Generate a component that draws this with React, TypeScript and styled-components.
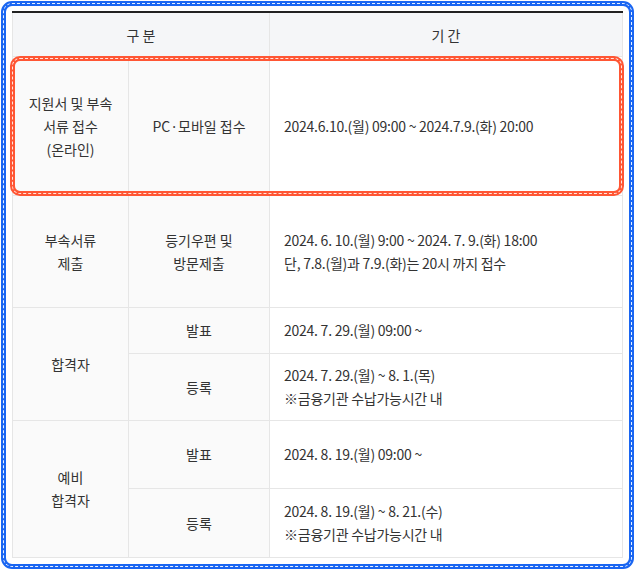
import React from 'react';
import styled, { createGlobalStyle } from 'styled-components';

const GlobalStyle = createGlobalStyle`
  html, body {
    margin: 0;
    padding: 0;
    background: #ffffff;
  }
  body {
    font-family: "Noto Sans CJK KR", "Noto Sans", sans-serif;
    color: #333333;
  }
`;

const Frame = styled.div`
  position: relative;
  box-sizing: border-box;
  width: 633px;
  height: 568px;
  margin: 1px;
  padding: 5px 6px 5px 6px;
  border: 5px solid #1a66f2;
  border-radius: 11px;

  &::before {
    content: '';
    position: absolute;
    inset: -3px;
    border: 1px dashed rgba(255, 255, 255, 0.9);
    border-radius: 9px;
    pointer-events: none;
  }
`;

// red annotation box drawn over the first body row
const Highlight = styled.div`
  position: absolute;
  left: 4px;
  top: 50px;
  width: 614px;
  height: 140px;
  box-sizing: border-box;
  border: 5px solid #ff5634;
  border-radius: 10px;
  pointer-events: none;

  &::before {
    content: '';
    position: absolute;
    inset: -3px;
    border: 1px dashed rgba(255, 255, 255, 0.85);
    border-radius: 8px;
  }
`;

const Table = styled.table`
  width: 100%;
  border-collapse: collapse;
  table-layout: fixed;
  font-size: 14px;
  border-top: 2px solid #222222;
  border-left: 1px solid #e6e6e6;
  border-right: 1px solid #e6e6e6;
`;

const Th = styled.th`
  height: 43px;
  padding: 0;
  background: #f5f6f8;
  font-weight: 400;
  color: #333333;
  text-align: center;
  border-bottom: 1px solid #e6e6e6;
  border-left: 1px solid #e6e6e6;
`;

const Cell = styled.td<{ $left?: boolean }>`
  padding: 0 14px;
  line-height: 23px;
  text-align: ${p => (p.$left ? 'left' : 'center')};
  background: ${p => (p.$left ? '#ffffff' : '#fafafa')};
  border-bottom: 1px solid #e6e6e6;
  border-left: 1px solid #e6e6e6;
  color: #333333;
  vertical-align: middle;
  white-space: nowrap;
  letter-spacing: ${p => (p.$left ? '-0.25px' : '0')};
`;

const Dot = styled.span`
  font-family: "Noto Sans", sans-serif;
  margin: 0 2px;
`;

const Row = styled.tr<{ $h: number }>`
  height: ${p => p.$h}px;
`;

const App: React.FC = () => {
  return (
    <>
      <GlobalStyle />
      <Frame>
        <Table>
          <colgroup>
            <col style={{ width: 116 }} />
            <col style={{ width: 141 }} />
            <col />
          </colgroup>
          <thead>
            <tr>
              <Th colSpan={2}>구 분</Th>
              <Th>기 간</Th>
            </tr>
          </thead>
          <tbody>
            <Row $h={139}>
              <Cell>
                지원서 및 부속
                <br />
                서류 접수
                <br />
                (온라인)
              </Cell>
              <Cell>
                PC<Dot>·</Dot>모바일 접수
              </Cell>
              <Cell $left>2024.6.10.(월) 09:00 ~ 2024.7.9.(화) 20:00</Cell>
            </Row>
            <Row $h={112}>
              <Cell>
                부속서류
                <br />
                제출
              </Cell>
              <Cell>
                등기우편 및
                <br />
                방문제출
              </Cell>
              <Cell $left>
                2024. 6. 10.(월) 9:00 ~ 2024. 7. 9.(화) 18:00
                <br />
                단, 7.8.(월)과 7.9.(화)는 20시 까지 접수
              </Cell>
            </Row>
            <Row $h={46}>
              <Cell rowSpan={2}>합격자</Cell>
              <Cell>발표</Cell>
              <Cell $left>2024. 7. 29.(월) 09:00 ~</Cell>
            </Row>
            <Row $h={67}>
              <Cell>등록</Cell>
              <Cell $left>
                2024. 7. 29.(월) ~ 8. 1.(목)
                <br />
                ※금융기관 수납가능시간 내
              </Cell>
            </Row>
            <Row $h={68}>
              <Cell rowSpan={2}>
                예비
                <br />
                합격자
              </Cell>
              <Cell>발표</Cell>
              <Cell $left>2024. 8. 19.(월) 09:00 ~</Cell>
            </Row>
            <Row $h={69}>
              <Cell>등록</Cell>
              <Cell $left>
                2024. 8. 19.(월) ~ 8. 21.(수)
                <br />
                ※금융기관 수납가능시간 내
              </Cell>
            </Row>
          </tbody>
        </Table>
        <Highlight />
      </Frame>
    </>
  );
};

export default App;
